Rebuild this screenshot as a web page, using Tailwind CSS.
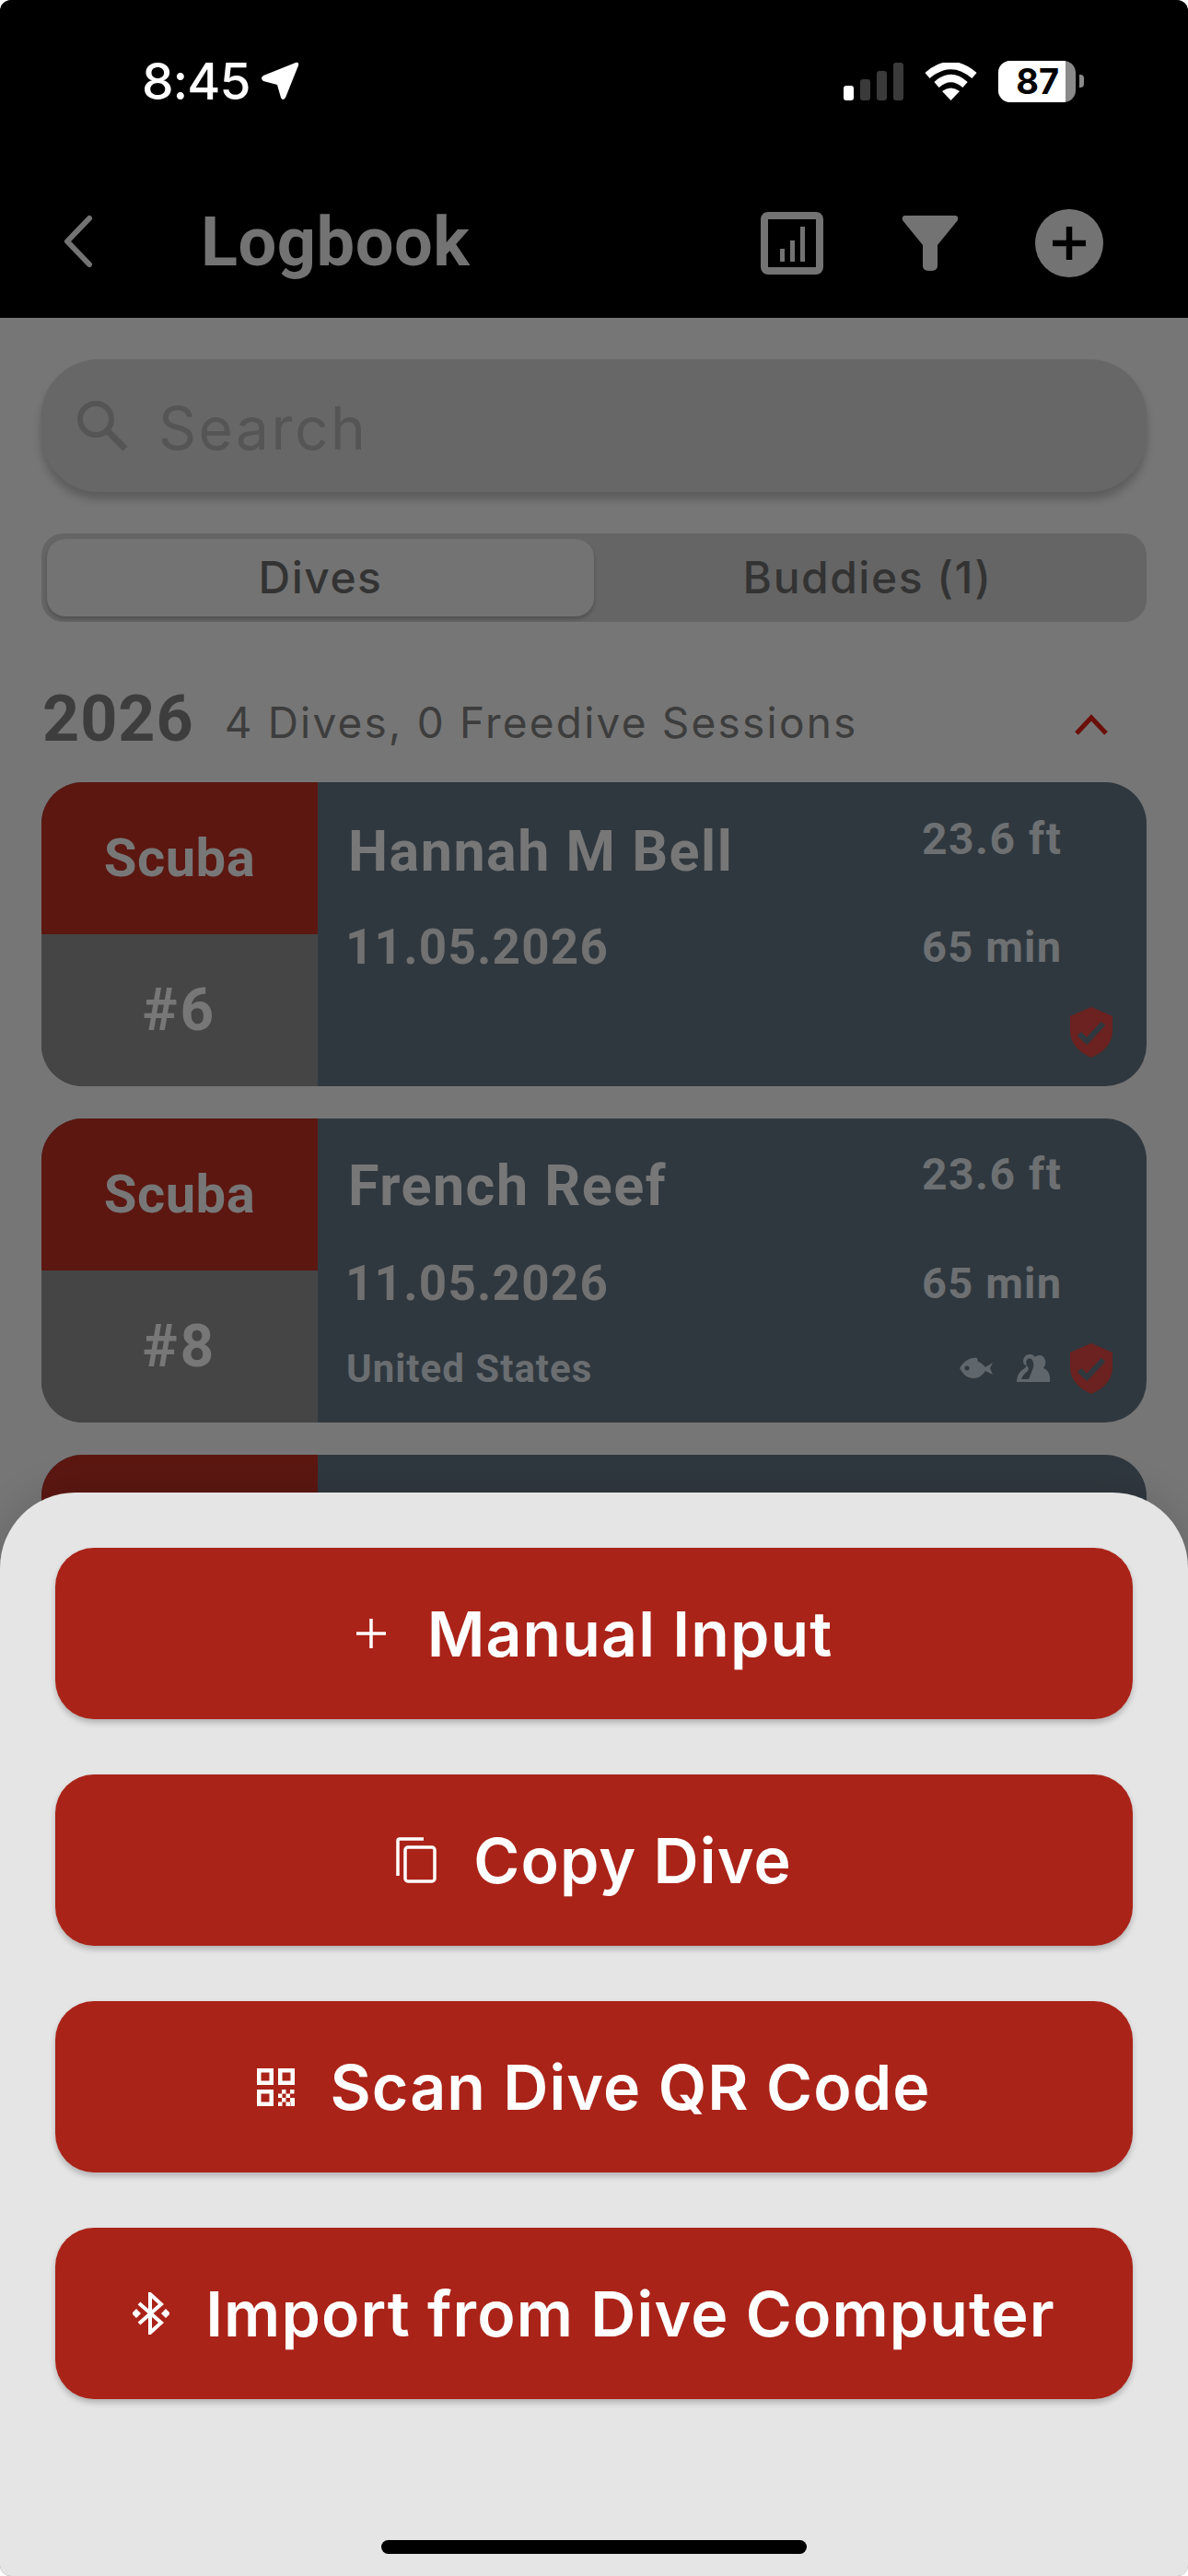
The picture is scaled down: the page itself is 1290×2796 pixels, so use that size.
<!DOCTYPE html>
<html>
<head>
<meta charset="utf-8">
<script src="https://cdn.jsdelivr.net/npm/@tailwindcss/browser@4"></script>
</head>
<body class="bg-white">
<div class="relative w-[1290px] h-[2796px] overflow-hidden rounded-[12px] bg-[#767676] font-['Roboto',sans-serif]">
  <!-- header -->
  <header class="h-[345px] bg-black flex flex-col">
    <div class="h-[176px] flex items-start pt-[60px] pl-[154px] pr-[113px] justify-between">
      <div class="flex items-center gap-[12px] h-[56px]">
        <span class="text-white text-[55px] leading-[56px] font-medium font-['Inter',sans-serif] tracking-[-1px]">8:45</span>
        <svg width="42" height="42" viewBox="0 0 42 42"><path d="M38 1 Q42 0 41 4 L27 39 Q24 43 22 39 L18 25 L3 21 Q-1 18 3 15 Z" fill="#fff"/></svg>
      </div>
      <div class="flex items-center h-[56px]">
        <div class="flex items-end gap-[7px] h-[41px] mr-[23px]">
          <span class="w-[11px] h-[16px] rounded-[3px] bg-white"></span>
          <span class="w-[11px] h-[23px] rounded-[3px] bg-[#3a3a3a]"></span>
          <span class="w-[11px] h-[32px] rounded-[3px] bg-[#3a3a3a]"></span>
          <span class="w-[11px] h-[41px] rounded-[3px] bg-[#3a3a3a]"></span>
        </div>
        <svg width="57" height="41" viewBox="0 0 57 41" class="mr-[23px]"><path d="M3 14 Q28.500 -8 54 14" fill="none" stroke="#fff" stroke-width="8"/><path d="M13 24 Q28.500 10 44 24" fill="none" stroke="#fff" stroke-width="8"/><path d="M19 31 Q28.500 24 38 31 L28.500 41 Z" fill="#fff"/></svg>
        <div class="relative flex w-[84px] h-[45px] rounded-[13px] overflow-hidden bg-[#8a8a8a]">
          <div class="w-[73px] h-full bg-white flex items-center justify-end pr-[7px]"><span class="text-black text-[38px] leading-[45px] font-bold font-['Inter',sans-serif]">87</span></div>
        </div>
        <span class="ml-[4px] w-[5px] h-[14px] rounded-r-[4px] bg-[#8a8a8a]"></span>
      </div>
    </div>
    <div class="flex-1 flex items-start pl-[65px] pt-[47px] pr-[92px]">
      <svg width="38" height="60" viewBox="0 0 38 60" class="mt-[9px]"><path d="M32 5 L8 30 L32 55" fill="none" stroke="#737373" stroke-width="6" stroke-linecap="round" stroke-linejoin="round"/></svg>
      <h1 class="ml-[115px] text-[74px] leading-[100px] -mt-[10px] font-bold text-[#737373] tracking-[0.5px]">Logbook</h1>
      <div class="ml-auto flex items-center">
        <svg width="68" height="68" viewBox="0 0 68 68" class="mt-[4px]"><rect x="4" y="4" width="60" height="60" rx="4" fill="none" stroke="#737373" stroke-width="8"/><path d="M21 40h5v14h-5zM32 31h5v23h-5zM43 16h5v38h-5z" fill="#737373"/></svg>
        <svg width="62" height="60" viewBox="0 0 62 60" class="ml-[85px] mt-[4px]"><path d="M4 0 H58 Q62 0 61 5 L39 32 V55 Q39 60 31 60 Q23 60 23 55 V32 L1 5 Q0 0 4 0 Z" fill="#737373"/></svg>
        <svg width="74" height="74" viewBox="0 0 74 74" class="ml-[83px] mt-[4px]"><circle cx="37" cy="37" r="37" fill="#737373"/><path d="M37 19 V55 M19 37 H55" stroke="#000" stroke-width="6.500" fill="none"/></svg>
      </div>
    </div>
  </header>

  <main class="px-[45px] pt-[45px]">
    <!-- search -->
    <div class="h-[144px] rounded-[62px] bg-[#676767] shadow-[0_8px_10px_rgba(0,0,0,0.22)] flex items-center pl-[38px]">
      <svg width="56" height="56" viewBox="0 0 56 56"><circle cx="21" cy="21" r="17" fill="none" stroke="#555555" stroke-width="6"/><path d="M33 33 L53 53" stroke="#555555" stroke-width="7" fill="none"/></svg>
      <span class="ml-[33px] mt-[5px] text-[64px] leading-[72px] text-[#555555] font-['Inter',sans-serif] tracking-[2.500px]">Search</span>
    </div>
    <!-- segmented -->
    <div class="mt-[45px] h-[96px] rounded-[24px] bg-[#656565] p-[6px] flex font-['Inter',sans-serif]">
      <div class="w-[594px] rounded-[20px] bg-[#737373] shadow-[0_3px_4px_rgba(0,0,0,0.2)] flex items-center justify-center text-[48px] font-medium text-[#333333] tracking-[1.500px]">Dives</div>
      <div class="flex-1 flex items-center justify-center text-[48px] font-medium text-[#333333] tracking-[1.500px]">Buddies (1)</div>
    </div>
    <!-- year -->
    <div class="mt-[60px] h-[90px] flex items-center relative">
      <span class="ml-[1px] text-[70px] leading-[90px] font-bold text-[#3d3d3d] tracking-[1px]">2026</span>
      <span class="ml-[33px] mt-[8px] text-[46px] leading-[60px] text-[#3d3d3d] font-['Inter',sans-serif] tracking-[2.200px]">4 Dives, 0 Freedive Sessions</span>
      <svg width="38" height="24" viewBox="0 0 38 24" class="ml-auto mr-[41px] mt-[12px]"><path d="M3 22 L19 5 L35 22" fill="none" stroke="#6b0f0a" stroke-width="5"/></svg>
    </div>
    <!-- cards -->
    <div class="mt-[24px] flex flex-col gap-[35px]">
      <article class="flex h-[330px] rounded-[45px] overflow-hidden bg-[#30383f]">
        <div class="w-[300px] flex flex-col">
          <div class="h-[165px] bg-[#5c1711] flex items-center justify-center text-[58px] font-bold text-[#777777] tracking-[0.5px]">Scuba</div>
          <div class="flex-1 bg-[#454545] flex items-center justify-center text-[64px] font-bold text-[#777777] tracking-[3px]">#6</div>
        </div>
        <div class="flex-1 flex flex-col">
          <div class="h-[146px] flex pl-[33px]">
            <span class="flex-1 text-[61px] leading-[150px] font-bold text-[#777777] tracking-[1.500px]">Hannah M Bell</span>
            <span class="w-[244px] text-[48px] leading-[124px] font-bold text-[#6d7072] tracking-[1.500px]">23.6 ft</span>
          </div>
          <div class="h-[66px] flex pl-[30px]">
            <span class="flex-1 text-[53px] leading-[66px] font-bold text-[#717171] tracking-[1.200px]">11.05.2026</span>
            <span class="w-[244px] text-[47px] leading-[66px] font-bold text-[#6d7072] tracking-[1.200px]">65 min</span>
          </div>
          <div class="h-[118px] flex items-center justify-end pr-[37px]">
            <svg width="46" height="55" viewBox="0 0 46 55"><path d="M23 0 L46 10 V26 C46 40 36 49 23 55 C10 49 0 40 0 26 V10 Z" fill="#6b2220"/><path d="M10 29 L18 37 L36 18" fill="none" stroke="#30383f" stroke-width="6"/></svg>
          </div>
        </div>
      </article>

      <article class="flex h-[330px] rounded-[45px] overflow-hidden bg-[#30383f]">
        <div class="w-[300px] flex flex-col">
          <div class="h-[165px] bg-[#5c1711] flex items-center justify-center text-[58px] font-bold text-[#777777] tracking-[0.5px]">Scuba</div>
          <div class="flex-1 bg-[#454545] flex items-center justify-center text-[64px] font-bold text-[#777777] tracking-[3px]">#8</div>
        </div>
        <div class="flex-1 flex flex-col">
          <div class="h-[146px] flex pl-[33px]">
            <span class="flex-1 text-[61px] leading-[146px] font-bold text-[#777777] tracking-[1.500px]">French Reef</span>
            <span class="w-[244px] text-[48px] leading-[122px] font-bold text-[#6d7072] tracking-[1.500px]">23.6 ft</span>
          </div>
          <div class="h-[66px] flex pl-[30px]">
            <span class="flex-1 text-[53px] leading-[66px] font-bold text-[#717171] tracking-[1.200px]">11.05.2026</span>
            <span class="w-[244px] text-[47px] leading-[66px] font-bold text-[#6d7072] tracking-[1.200px]">65 min</span>
          </div>
          <div class="h-[118px] flex items-center pl-[31px] pr-[37px]">
            <span class="text-[42px] font-bold text-[#6a6e71] tracking-[1px]">United States</span>
            <svg width="37" height="25" viewBox="0 0 37 25" class="ml-auto"><path d="M0 12 C6 2 14 0 19 1 L20 5 C24 6 26 9 28 11 L36 6 L33 12 L36 19 L28 15 C24 21 18 25 10 22 C6 21 3 17 0 12 Z" fill="#5f676c"/><circle cx="8" cy="12" r="2.500" fill="#30383f"/></svg>
            <svg width="37" height="30" viewBox="0 0 37 30" class="ml-[25px]"><path d="M11 12 C5 12 6 0 14 0 C18 0 19 2 20 3 C23 0 30 0 31 7 C32 11 30 13 29 15 C34 17 37 22 36 30 H0 C0 23 3 18 9 15 Z" fill="#5f676c"/><path d="M16 5 C11 3 9 8 11 12 C13 15 14 16 11 19 C8 21 6 24 5 27 H13 L17 17 C18 14 20 11 16 5 Z" fill="#30383f"/></svg>
            <svg width="46" height="55" viewBox="0 0 46 55" class="ml-[21px]"><path d="M23 0 L46 10 V26 C46 40 36 49 23 55 C10 49 0 40 0 26 V10 Z" fill="#6b2220"/><path d="M10 29 L18 37 L36 18" fill="none" stroke="#30383f" stroke-width="6"/></svg>
          </div>
        </div>
      </article>

      <article class="flex h-[330px] rounded-[45px] overflow-hidden bg-[#30383f]">
        <div class="w-[300px] bg-[#5c1711]"></div>
        <div class="flex-1"></div>
      </article>
    </div>
  </main>

  <!-- bottom sheet -->
  <section class="absolute left-0 right-0 top-[1620px] bottom-0 rounded-t-[82px] bg-[#e5e5e5] shadow-[0_-4px_40px_rgba(0,0,0,0.12)] px-[60px] pt-[60px] flex flex-col gap-[60px] font-['Inter',sans-serif]">
    <button class="h-[186px] rounded-[42px] bg-[#aa2318] shadow-[0_4px_6px_rgba(0,0,0,0.22)] flex items-center justify-center text-white text-[68px] font-semibold tracking-[1.100px]">
      <svg width="34" height="34" viewBox="0 0 34 34" class="mr-[44px]"><path d="M17 1 V33 M1 17 H33" stroke="#fff" stroke-width="3.500" fill="none"/></svg>
      <span>Manual Input</span>
    </button>
    <button class="h-[186px] rounded-[42px] bg-[#aa2318] shadow-[0_4px_6px_rgba(0,0,0,0.22)] flex items-center justify-center text-white text-[68px] font-semibold tracking-[1.100px]">
      <svg width="44" height="50" viewBox="0 0 44 50" class="mr-[40px]"><path d="M2 42 V4 Q2 2 4 2 H30" fill="none" stroke="#fff" stroke-width="3.500"/><rect x="10" y="11" width="32" height="37" rx="3" fill="none" stroke="#fff" stroke-width="3.500"/></svg>
      <span>Copy Dive</span>
    </button>
    <button class="h-[186px] rounded-[42px] bg-[#aa2318] shadow-[0_4px_6px_rgba(0,0,0,0.22)] flex items-center justify-center text-white text-[68px] font-semibold tracking-[1.100px]">
      <svg width="41" height="41" viewBox="0 0 41 41" class="mr-[38px]" fill="#fff"><path fill-rule="evenodd" d="M0 0H18V18H0ZM4.500 4.500V13.500H13.500V4.500ZM23 0H41V18H23ZM27.500 4.500V13.500H36.500V4.500ZM0 23H18V41H0ZM4.500 27.500V36.500H13.500V27.500Z"/><path d="M27 23h4.500v4.500H27zM36 23h4.500v4.500H36zM23 27.500h4.500V32H23zM31.500 27.500H36V32h-4.500zM27 32h4.500v4.500H27zM36 32h5v4.500h-5zM23 36.500h4.500V41H23zM31.500 36.500H36V41h-4.500zM36.500 36.500H41V41h-4.500z"/></svg>
      <span>Scan Dive QR Code</span>
    </button>
    <button class="h-[186px] rounded-[42px] bg-[#aa2318] shadow-[0_4px_6px_rgba(0,0,0,0.22)] flex items-center justify-center text-white text-[68px] font-semibold tracking-[1.100px]">
      <svg width="40" height="46" viewBox="0 0 40 46" class="mr-[39px]"><path d="M7 12 L31 33 L19 44 V2 L31 13 L7 34" fill="none" stroke="#fff" stroke-width="4"/><path d="M4 18 L9 23 L4 28 L-1 23 Z M36 18 L41 23 L36 28 L31 23 Z" fill="#fff"/></svg>
      <span>Import from Dive Computer</span>
    </button>
  </section>
  <div class="absolute left-[414px] top-[2757px] w-[462px] h-[15px] rounded-full bg-black"></div>
</div>
</body>
</html>
